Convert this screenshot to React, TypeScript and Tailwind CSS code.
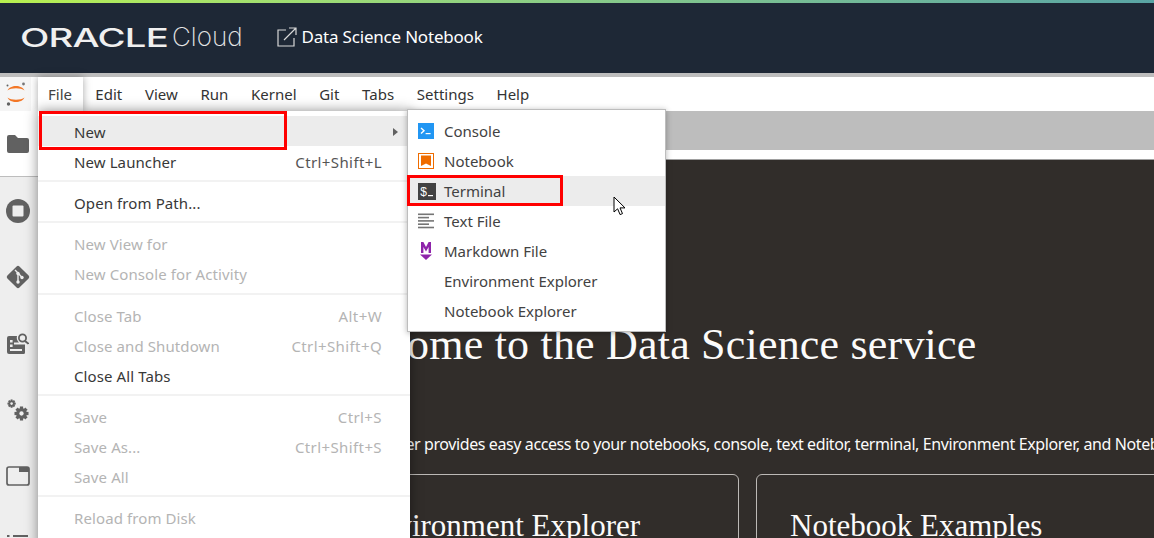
import type { ReactNode } from 'react'

const SANS = "font-['Noto_Sans',sans-serif]"

const menuBar = ['Edit', 'View', 'Run', 'Kernel', 'Git', 'Tabs', 'Settings', 'Help']

type Row = { label: string; shortcut?: string; disabled?: boolean; active?: boolean; arrow?: boolean }

const fileMenu: Row[][] = [
  [{ label: 'New', active: true, arrow: true }, { label: 'New Launcher', shortcut: 'Ctrl+Shift+L' }],
  [{ label: 'Open from Path...' }],
  [{ label: 'New View for', disabled: true }, { label: 'New Console for Activity', disabled: true }],
  [
    { label: 'Close Tab', shortcut: 'Alt+W', disabled: true },
    { label: 'Close and Shutdown', shortcut: 'Ctrl+Shift+Q', disabled: true },
    { label: 'Close All Tabs' },
  ],
  [
    { label: 'Save', shortcut: 'Ctrl+S', disabled: true },
    { label: 'Save As...', shortcut: 'Ctrl+Shift+S', disabled: true },
    { label: 'Save All', disabled: true },
  ],
  [{ label: 'Reload from Disk', disabled: true }],
]

function JupyterLogo() {
  return (
    <svg width="22" height="26" viewBox="0 0 22 26">
      <path d="M2.5 9.5C5 3.5 17 3.5 19.5 9.5C16 6.5 6 6.5 2.5 9.5Z" fill="#f37726" />
      <path d="M2.5 16.5C5 22.5 17 22.5 19.5 16.5C16 19.5 6 19.5 2.5 16.5Z" fill="#f37726" />
      <circle cx="18.5" cy="3" r="1.4" fill="#767677" />
      <circle cx="2.5" cy="4.5" r="1" fill="#616262" />
      <circle cx="3.5" cy="23" r="1.7" fill="#616262" />
    </svg>
  )
}

function FolderIcon() {
  return (
    <svg width="22" height="18" viewBox="0 0 22 18" fill="#616161">
      <path d="M2 0h6l3 3h9a2 2 0 0 1 2 2v11a2 2 0 0 1-2 2H2a2 2 0 0 1-2-2V2a2 2 0 0 1 2-2Z" />
    </svg>
  )
}

function StopIcon() {
  return (
    <svg width="24" height="24" viewBox="0 0 24 24">
      <circle cx="12" cy="12" r="12" fill="#616161" />
      <rect x="6.5" y="6.5" width="11" height="11" rx="1" fill="#eeeeee" />
    </svg>
  )
}

function GitIcon() {
  return (
    <svg width="26" height="26" viewBox="0 0 26 26">
      <rect x="4.5" y="4.5" width="17" height="17" rx="2" transform="rotate(45 13 13)" fill="#616161" />
      <path d="M10 6l3 3M13 9v9M13 9l4 4.5" stroke="#eeeeee" strokeWidth="1.4" fill="none" />
      <circle cx="13" cy="9.5" r="1.7" fill="#eeeeee" />
      <circle cx="13" cy="18" r="1.7" fill="#eeeeee" />
      <circle cx="17" cy="13.5" r="1.7" fill="#eeeeee" />
    </svg>
  )
}

function InspectorIcon() {
  return (
    <svg width="22" height="22" viewBox="0 0 22 22" fill="#616161">
      <path d="M2 3h8a6.5 6.5 0 0 0 2 6.5H7v2h11v8a1.5 1.5 0 0 1-1.5 1.5H2a2 2 0 0 1-2-2V5a2 2 0 0 1 2-2Z" />
      <rect x="3" y="7" width="2.6" height="2.5" fill="#eeeeee" />
      <rect x="3" y="11.5" width="2.6" height="2.5" fill="#eeeeee" />
      <rect x="3" y="16" width="12" height="2" fill="#eeeeee" />
      <circle cx="15.5" cy="5" r="3.6" fill="none" stroke="#616161" strokeWidth="1.8" />
      <path d="M18 8l3.5 2.8" stroke="#616161" strokeWidth="2" />
    </svg>
  )
}

function Gear({ cx, cy, r }: { cx: number; cy: number; r: number }) {
  const teeth = [0, 45, 90, 135]
  return (
    <g>
      {teeth.map((a) => (
        <rect
          key={a}
          x={cx - r * 0.3}
          y={cy - r * 1.3}
          width={r * 0.6}
          height={r * 2.6}
          fill="#616161"
          transform={`rotate(${a} ${cx} ${cy})`}
        />
      ))}
      <circle cx={cx} cy={cy} r={r} fill="#616161" />
      <circle cx={cx} cy={cy} r={r * 0.4} fill="#eeeeee" />
    </g>
  )
}

function GearsIcon() {
  return (
    <svg width="22" height="22" viewBox="0 0 22 22">
      <Gear cx={4.6} cy={4.6} r={3.2} />
      <Gear cx={14.5} cy={14.5} r={5.4} />
    </svg>
  )
}

function TabsIcon() {
  return (
    <svg width="24" height="20" viewBox="0 0 24 20">
      <rect x="1" y="1" width="22" height="18" rx="2" fill="none" stroke="#616161" strokeWidth="1.7" />
      <rect x="13" y="1" width="10" height="5" fill="#616161" />
    </svg>
  )
}

function ListIcon() {
  return (
    <svg width="24" height="16" viewBox="0 0 24 16" fill="#616161">
      <rect x="1" y="1" width="2.5" height="2" />
      <rect x="7" y="1" width="15" height="2" />
      <rect x="1" y="7" width="2.5" height="2" />
      <rect x="7" y="7" width="15" height="2" />
    </svg>
  )
}

function ConsoleIcon() {
  return (
    <svg width="16" height="16" viewBox="0 0 16 16">
      <rect width="16" height="16" fill="#2196f3" />
      <path d="M3 5l3 2.8-3 2.8" stroke="#fff" strokeWidth="1.4" fill="none" />
      <rect x="7.6" y="10" width="5" height="1.2" fill="#fff" />
    </svg>
  )
}

function NotebookIcon() {
  return (
    <svg width="16" height="16" viewBox="0 0 16 16">
      <rect width="16" height="16" fill="#ef6c00" />
      <rect x="1" y="1" width="14" height="14" fill="#fff" />
      <path d="M3 2.5h10v10.5L8 10.5 3 13Z" fill="#ef6c00" />
    </svg>
  )
}

function TerminalIcon() {
  return (
    <svg width="18" height="17" viewBox="0 0 18 17">
      <rect width="18" height="17" fill="#424242" />
      <text x="2" y="12.8" fontSize="12" fill="#fff" fontFamily="'Liberation Mono', monospace">
        $
      </text>
      <rect x="10" y="12" width="5" height="1.2" fill="#fff" />
    </svg>
  )
}

function TextFileIcon() {
  return (
    <svg width="16" height="16" viewBox="0 0 16 16" fill="#757575">
      <rect width="16" height="1.6" y="0.5" />
      <rect y="3.8" width="11" height="1.6" />
      <rect y="7.1" width="16" height="1.6" />
      <rect y="10.4" width="11" height="1.6" />
      <rect y="13.7" width="16" height="1.6" />
    </svg>
  )
}

function MarkdownIcon() {
  return (
    <svg className="ml-[2px]" width="12" height="18" viewBox="0 0 12 18" fill="#8e24aa">
      <path d="M1 0h2.4L6 5 8.6 0H11v11H8.6V5L6 9.6 3.4 5v6H1Z" />
      <path d="M0 12.5h12L6 18Z" />
    </svg>
  )
}

const launcherItems: { label: string; icon?: ReactNode; active?: boolean }[] = [
  { label: 'Console', icon: <ConsoleIcon /> },
  { label: 'Notebook', icon: <NotebookIcon /> },
  { label: 'Terminal', icon: <TerminalIcon />, active: true },
  { label: 'Text File', icon: <TextFileIcon /> },
  { label: 'Markdown File', icon: <MarkdownIcon /> },
  { label: 'Environment Explorer' },
  { label: 'Notebook Explorer' },
]

function Cursor() {
  return (
    <svg width="14" height="20" viewBox="0 0 14 20">
      <path
        d="M1 1v15l3.6-3.2 2.5 5.8 2.4-1-2.5-5.7H12Z"
        fill="#fff"
        stroke="#000"
        strokeWidth="1"
        strokeLinejoin="miter"
      />
    </svg>
  )
}

export default function App() {
  return (
    <div className={`relative h-[538px] w-[1154px] overflow-hidden bg-white ${SANS}`}>
      <div className="h-[3px] bg-gradient-to-r from-[#b8f04f] to-[#5aa5a5]" />

      <header className="flex h-[70px] items-center bg-[#1e2836] pb-[2px] pl-[20px] text-white">
        <span className="mt-[3px] w-[152px] shrink-0 origin-left scale-x-[1.53] font-['Inter',sans-serif] text-[25px] font-medium leading-none tracking-[-0.5px] text-[#f0f0f0]">
          ORACLE
        </span>
        <span className="font-['Inter',sans-serif] text-[26px] font-extralight leading-none text-[#e6e6e6]">
          Cloud
        </span>
        <svg className="ml-[34px]" width="20" height="20" viewBox="0 0 20 20" fill="none" stroke="#d8d8d8" strokeWidth="1.2">
          <path d="M9 3H1v16h16v-8" />
          <path d="M7 13L18.5 1.5M12 1h7v7" />
        </svg>
        <span className="ml-[5px] text-[17px] tracking-[-0.2px] text-white">Data Science Notebook</span>
      </header>

      <div className="h-[4px] bg-[#bdbdbd]" />

      <div className="flex h-[34px] bg-white">
        <div className="flex w-[31px] items-center justify-center bg-[#f5f5f5]">
          <JupyterLogo />
        </div>
        <div className="w-[7px]" />
        <nav className="flex text-[15px] text-[#333333]">
          <span className="relative z-30 flex h-[34px] w-[46px] items-center pl-[10px] text-[#424242]">File</span>
          {menuBar.map((m) => (
            <span key={m} className="flex items-center px-[11.35px]">
              {m}
            </span>
          ))}
        </nav>
      </div>

      <div className="flex h-[427px]">
        <aside className="w-[38px] shrink-0 bg-[#eeeeee]">
          <div className="flex h-[66px] items-center justify-center border-b border-[#bdbdbd] bg-white pr-[2px]">
            <FolderIcon />
          </div>
          <div className="flex h-[68px] items-center justify-center pr-[2px]">
            <StopIcon />
          </div>
          <div className="flex h-[66px] items-center justify-center pb-[2px] pr-[2px]">
            <GitIcon />
          </div>
          <div className="flex h-[66px] items-center justify-center pr-[2px]">
            <InspectorIcon />
          </div>
          <div className="flex h-[66px] items-center justify-center pr-[2px]">
            <GearsIcon />
          </div>
          <div className="flex h-[66px] items-center justify-center pr-[2px]">
            <TabsIcon />
          </div>
          <div className="flex h-[66px] items-center justify-center pr-[2px]">
            <ListIcon />
          </div>
        </aside>

        <main className="min-w-0 flex-1">
          <div className="h-[39px] bg-[#bdbdbd]" />
          <div className="h-[10px] border-b border-[#a0a0a0] bg-white" />
          <div className="h-[378px] overflow-hidden bg-[#312d2a] text-white">
            <h1 className="ml-[279px] mt-[161px] whitespace-nowrap font-['Liberation_Serif',serif] text-[44px] leading-[48px] tracking-[0.2px] text-[#fcfbfa]">
              Welcome to the Data Science service
            </h1>
            <p className="ml-[289px] mt-[65px] whitespace-nowrap text-[16px] leading-[20px] tracking-[-0.4px] text-[#fcfbfa]">
              The launcher provides easy access to your notebooks, console, text editor, terminal, Environment Explorer, and Notebook Examples.
            </p>
            <div className="ml-[288px] mt-[20px] flex gap-[17px]">
              <section className="h-[200px] w-[413px] shrink-0 rounded-[6px] border border-[#bcb9b6] pl-[35px] pt-[34px]">
                <h2 className="whitespace-nowrap font-['Liberation_Serif',serif] text-[31px] leading-[34px] text-[#fcfbfa]">
                  Environment Explorer
                </h2>
              </section>
              <section className="h-[200px] w-[473px] shrink-0 rounded-[6px] border border-[#bcb9b6] pl-[33px] pt-[34px]">
                <h2 className="whitespace-nowrap font-['Liberation_Serif',serif] text-[31px] leading-[34px] text-[#fcfbfa]">
                  Notebook Examples
                </h2>
              </section>
            </div>
          </div>
        </main>
      </div>

      {/* File tab lifted over the menu */}
      <div className="absolute left-[38px] top-[77px] z-10 h-[34px] w-[45px] bg-white shadow-[0_0_8px_rgba(0,0,0,0.35)]" />

      {/* File menu */}
      <div className="absolute left-[38px] top-[111px] z-20 h-[440px] w-[372px] bg-white pt-[5px] text-[15px] tracking-[0.1px] shadow-[0_0_12px_rgba(0,0,0,0.45)]">
        {fileMenu.map((group, i) => (
          <div key={i} className={i === 3 ? 'pt-[1px]' : ''}>
            {i > 0 && <div className="mb-[5px] mt-[4px] h-[2px] bg-[#f2f2f2]" />}
            {group.map((row) => (
              <div
                key={row.label}
                className={`flex h-[30px] items-center pl-[36px] pr-[28px] pt-[2px] ${row.active ? 'bg-[#ececec]' : ''} ${
                  row.disabled ? 'text-[#b4b4b4]' : 'text-[#383838]'
                }`}
              >
                <span className="flex-1 whitespace-nowrap">{row.label}</span>
                {row.shortcut && (
                  <span className={`tracking-[0.4px] ${row.disabled ? 'text-[#b4b4b4]' : 'text-[#555555]'}`}>
                    {row.shortcut}
                  </span>
                )}
                {row.arrow && (
                  <svg className="-mr-[16px]" width="5" height="8" viewBox="0 0 5 8" fill="#616161">
                    <path d="M0 0l5 4-5 4Z" />
                  </svg>
                )}
              </div>
            ))}
          </div>
        ))}
      </div>

      {/* New submenu */}
      <div className="absolute left-[407px] top-[109px] z-30 h-[223px] w-[259px] border border-[#bdbdbd] bg-white pt-[6px] text-[15px] text-[#424242] shadow-[0_1px_6px_rgba(0,0,0,0.3)]">
        {launcherItems.map((item) => (
          <div key={item.label} className={`flex h-[30px] items-center ${item.active ? 'bg-[#ececec]' : ''}`}>
            <span className="flex w-[36px] shrink-0 justify-start pl-[10px]">{item.icon}</span>
            <span className="whitespace-nowrap">{item.label}</span>
          </div>
        ))}
      </div>

      {/* Red annotation boxes from the screenshot */}
      <div className="absolute left-[39px] top-[111px] z-40 h-[39px] w-[248px] border-[3.5px] border-[#ff0000]" />
      <div className="absolute left-[407px] top-[175px] z-40 h-[31px] w-[156px] border-[3px] border-[#ff0000]" />

      <div className="absolute left-[613px] top-[196px] z-50">
        <Cursor />
      </div>
    </div>
  )
}
